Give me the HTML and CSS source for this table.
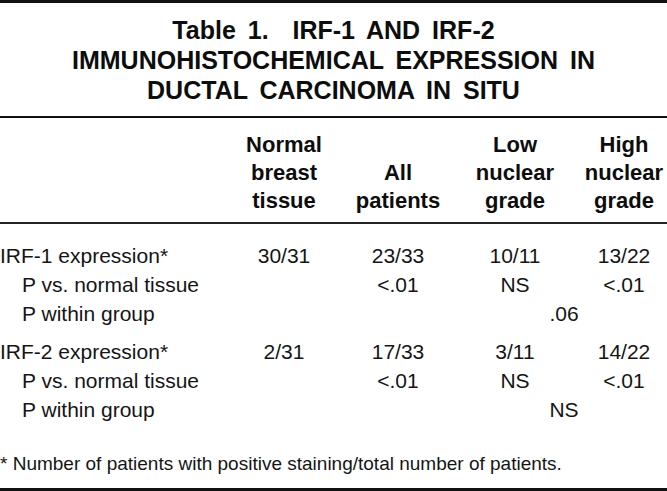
FILE: index.html
```html
<!DOCTYPE html>
<html>
<head>
<meta charset="utf-8">
<link rel="stylesheet" href="styles.css">
</head>
<body>
<div class="table">
  <h1 class="title">Table 1.&nbsp;&nbsp;IRF-1 AND IRF-2<br>IMMUNOHISTOCHEMICAL EXPRESSION IN<br>DUCTAL CARCINOMA IN SITU</h1>
  <div class="head cols">
    <div></div>
    <div class="hc">Normal<br>breast<br>tissue</div>
    <div class="hc">All<br>patients</div>
    <div class="hc">Low<br>nuclear<br>grade</div>
    <div class="hc last">High<br>nuclear<br>grade</div>
  </div>
  <div class="tbody">
    <div class="row cols">
      <div class="label">IRF-1 expression*</div>
      <div class="c">30/31</div>
      <div class="c">23/33</div>
      <div class="c">10/11</div>
      <div class="c last">13/22</div>
    </div>
    <div class="row cols">
      <div class="label sub">P vs. normal tissue</div>
      <div class="c"></div>
      <div class="c">&lt;.01</div>
      <div class="c">NS</div>
      <div class="c last">&lt;.01</div>
    </div>
    <div class="row cols">
      <div class="label sub">P within group</div>
      <div class="c"></div>
      <div class="c"></div>
      <div class="c span2">.06</div>
    </div>
    <div class="row cols group">
      <div class="label">IRF-2 expression*</div>
      <div class="c">2/31</div>
      <div class="c">17/33</div>
      <div class="c">3/11</div>
      <div class="c last">14/22</div>
    </div>
    <div class="row cols">
      <div class="label sub">P vs. normal tissue</div>
      <div class="c"></div>
      <div class="c">&lt;.01</div>
      <div class="c">NS</div>
      <div class="c last">&lt;.01</div>
    </div>
    <div class="row cols">
      <div class="label sub">P within group</div>
      <div class="c"></div>
      <div class="c"></div>
      <div class="c span2">NS</div>
    </div>
  </div>
  <p class="foot">* Number of patients with positive staining/total number of patients.</p>
</div>
</body>
</html>
```
FILE: styles.css
```css
html, body {
  margin: 0;
  padding: 0;
  background: #fff;
}
body {
  width: 667px;
  height: 491px;
  overflow: hidden;
  font-family: "Liberation Sans", Arial, sans-serif;
  color: #151515;
}
.table {
  border-top: 3px solid #111;
  border-bottom: 3px solid #111;
  height: 485px;
  display: flex;
  flex-direction: column;
}
.title {
  margin: 0;
  padding: 12px 0 11px;
  font-size: 25px;
  line-height: 30px;
  font-weight: bold;
  text-align: center;
  word-spacing: 5px;
  color: #0d0d0d;
  border-bottom: 2px solid #111;
}
.cols {
  display: grid;
  grid-template-columns: 227px 114px 114px 120px 92px;
}
.head {
  padding: 13px 0 7px;
  font-size: 22px;
  line-height: 28px;
  font-weight: bold;
  color: #0d0d0d;
  border-bottom: 2px solid #222;
}
.hc {
  text-align: center;
  align-self: end;
}
.hc.last, .c.last {
  padding-left: 6px;
}
.tbody {
  padding-top: 17px;
  font-size: 21px;
  line-height: 29px;
}
.row.group {
  margin-top: 9px;
}
.label {
  white-space: nowrap;
}
.label.sub {
  padding-left: 22px;
}
.c {
  text-align: center;
  white-space: nowrap;
}
.c.span2 {
  grid-column: 4 / span 2;
  padding-left: 6px;
}
.foot {
  margin: auto 0 12px;
  font-size: 19px;
  line-height: 24px;
}
```
